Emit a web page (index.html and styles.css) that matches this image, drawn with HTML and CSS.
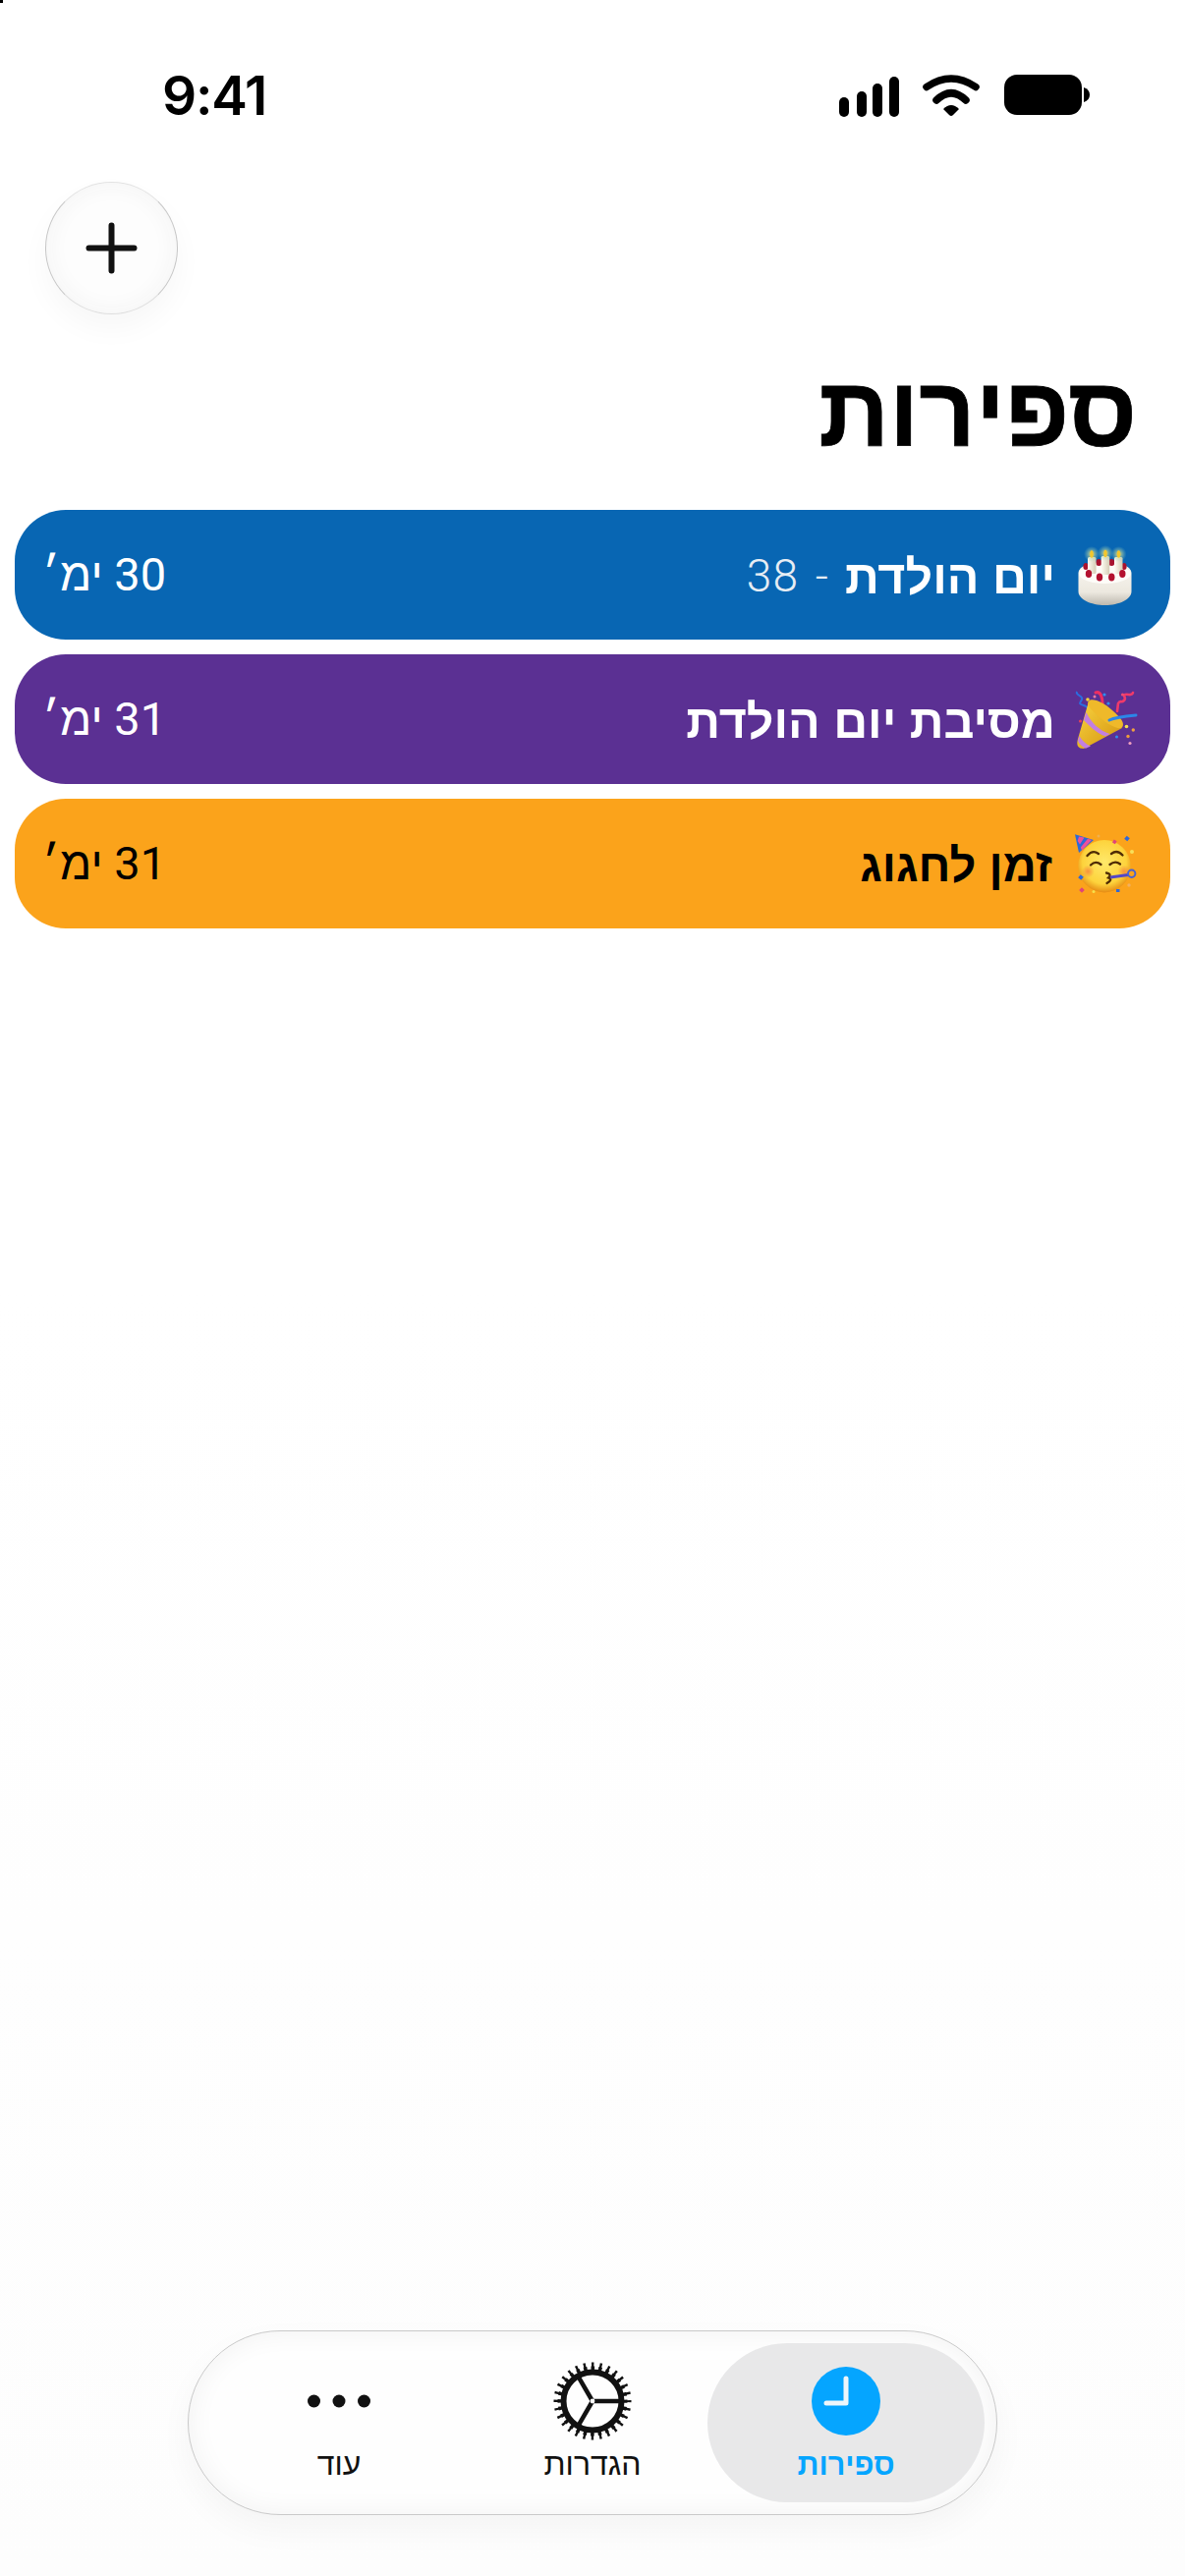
FILE: index.html
```html
<!DOCTYPE html>
<html lang="he" dir="rtl">
<head>
<meta charset="utf-8">
<title>ספירות</title>
<link rel="stylesheet" href="styles.css">
</head>
<body>
<div class="corner-mark"></div>
<div class="app">
  <header class="status" dir="ltr">
    <span class="time">9:41</span>
    <div class="status-icons">
      <svg class="signal" viewBox="0 0 61 41" width="61" height="41"><g fill="#000"><rect x="0" y="21" width="10" height="20" rx="5"/><rect x="18" y="15" width="10" height="26" rx="5"/><rect x="34" y="7" width="10" height="34" rx="5"/><rect x="51" y="0" width="10" height="41" rx="5"/></g></svg>
      <svg class="wifi" viewBox="0 0 58 42" width="58" height="42"><path d="M4 12.5Q29-4.5 54 12.5" fill="none" stroke="#000" stroke-width="7.5" stroke-linecap="round"/><path d="M14 26Q29 11.4 44 26" fill="none" stroke="#000" stroke-width="7.5" stroke-linecap="round"/><path d="M21 35Q29 27 37 35L31 41Q29 43 27 41Z" fill="#000"/></svg>
      <svg class="battery" viewBox="0 0 87 41" width="87" height="41"><rect x="0" y="0" width="79" height="41" rx="13" fill="#000"/><path d="M81 13Q87 15 87 20.5T81 28Z" fill="#000"/></svg>
    </div>
  </header>

  <div class="toolbar">
    <button class="add-btn" aria-label="הוספה">
      <svg viewBox="0 0 55 55" width="55" height="55"><path d="M27.5 4.500V50.500M4.500 27.500H50.500" stroke="#111" stroke-width="6" stroke-linecap="round" fill="none"/></svg>
    </button>
  </div>

  <h1 class="title">ספירות</h1>

  <ul class="counters">
    <li class="counter blue">
      <div class="counter-name">
        <svg class="emoji" viewBox="0 0 60 60">
          <defs>
            <linearGradient id="cakeBody" x1="0" x2="0" y1="0" y2="1"><stop offset="0" stop-color="#fbf9f3"/><stop offset=".7" stop-color="#ece8df"/><stop offset="1" stop-color="#bdb8ae"/></linearGradient>
            <linearGradient id="candle" x1="0" x2="1" y1="0" y2="0"><stop offset="0" stop-color="#fffdf4"/><stop offset="1" stop-color="#d5cdb6"/></linearGradient>
            <radialGradient id="glow"><stop offset="0" stop-color="#f5e57a" stop-opacity=".95"/><stop offset="1" stop-color="#8fd0c0" stop-opacity="0"/></radialGradient>
          </defs>
          <path d="M2.5 28.5C2.5 21 15 17 29.5 17S56.500 21 56.500 28.500V47C56.500 55 44 61 29.500 61S2.500 55 2.500 47Z" fill="url(#cakeBody)"/>
          <ellipse cx="29.500" cy="29" rx="26.500" ry="10" fill="#fdfcf8"/>
          <g fill="#a8132f"><ellipse cx="10" cy="21.500" rx="2.600" ry="3.500"/><ellipse cx="23.300" cy="17.500" rx="3" ry="3.600"/><ellipse cx="36.300" cy="17.500" rx="3" ry="3.600"/><ellipse cx="49" cy="21.500" rx="2.600" ry="3.500"/></g>
          <g fill="url(#candle)"><rect x="12" y="12" width="8.500" height="17" rx="1.500"/><rect x="25.700" y="11" width="8.500" height="19" rx="1.500"/><rect x="39" y="12" width="8.500" height="17" rx="1.500"/></g>
          <g fill="url(#glow)"><circle cx="16" cy="9" r="8"/><circle cx="30" cy="8" r="8"/><circle cx="43.500" cy="9" r="8"/></g>
          <g fill="#f2c62d"><ellipse cx="16" cy="9" rx="1.800" ry="3.800"/><ellipse cx="30" cy="8.500" rx="1.800" ry="3.800"/><ellipse cx="43.500" cy="9" rx="1.800" ry="3.800"/></g>
          <g fill="#b3112f"><ellipse cx="13" cy="29" rx="3.200" ry="4.100"/><ellipse cx="24" cy="32.500" rx="3.200" ry="4.100"/><ellipse cx="36.300" cy="32.500" rx="3.200" ry="4.100"/><ellipse cx="47.300" cy="29" rx="3.200" ry="4.100"/></g>
        </svg>
        <span class="name-main">יום הולדת</span>
        <span class="name-age">- 38</span>
      </div>
      <span class="counter-days">30 ימ׳</span>
    </li>
    <li class="counter purple">
      <div class="counter-name">
        <svg class="emoji" viewBox="0 0 60 60">
          <defs>
            <linearGradient id="coneFill" x1="0" x2="1" y1="0" y2="1"><stop offset="0" stop-color="#f9d440"/><stop offset="1" stop-color="#d3930f"/></linearGradient>
          </defs>
          <path d="M1 2C-1 6 8 6 6 10S2 14 8 16 12 21 11 24" fill="none" stroke="#2b6ee0" stroke-width="2"/>
          <path d="M20 3C25 1 27 8 27 14L28 24" fill="none" stroke="#ee2f62" stroke-width="3" stroke-linecap="round"/>
          <path d="M42 22L43 14C45 10 46 14 49 11S47 6 50 5 57 7 58 3" fill="none" stroke="#ef3a6a" stroke-width="2.600" stroke-linecap="round"/>
          <path d="M2 50L13 12 47 39 8 60Q-1 60 2 50Z" fill="url(#coneFill)"/>
          <path d="M10.500 23C15 33 24 42 34.500 45L30 47.500C20 44 12 35 8 31Z" fill="#c27fe0"/>
          <path d="M3.500 47C6 52 11 56 15 57.500L10 59.700C6 58 3 55 2 52Z" fill="#c27fe0"/>
          <path d="M13 11.500C17 8 28 13 37 21S50 34 47 38.500C43 41 33 36 24 28S10 15 13 11.500Z" fill="#efb92a"/>
          <path d="M34 31C40 28 50 27 61 26" fill="none" stroke="#2c86e8" stroke-width="3" stroke-linecap="round"/>
          <g><circle cx="12" cy="10" r="1.800" fill="#f3d33c"/><circle cx="19" cy="7" r="1.500" fill="#f07aa0"/><circle cx="29" cy="5" r="1.600" fill="#2f8cf0"/><circle cx="33" cy="14" r="1.600" fill="#2f8cf0"/><circle cx="47.500" cy="5" r="1.600" fill="#ee4c72"/><circle cx="4.500" cy="32" r="1.600" fill="#e0405c"/><circle cx="51.500" cy="37.500" r="1.800" fill="#f6de50"/><circle cx="58.300" cy="41" r="1.700" fill="#f0a040"/><circle cx="53" cy="47.500" r="1.700" fill="#ee9a3c"/><circle cx="41.500" cy="48" r="1.500" fill="#2f8cf0"/><circle cx="55" cy="54.500" r="1.600" fill="#f0a0c0"/></g>
        </svg>
        <span class="name-main">מסיבת יום הולדת</span>
      </div>
      <span class="counter-days">31 ימ׳</span>
    </li>
    <li class="counter orange">
      <div class="counter-name">
        <svg class="emoji" viewBox="0 0 60 60">
          <defs>
            <radialGradient id="faceFill" cx=".5" cy=".42" r=".58"><stop offset="0" stop-color="#ffe96a"/><stop offset=".72" stop-color="#fdd33c"/><stop offset="1" stop-color="#e68c14"/></radialGradient>
            <radialGradient id="blush"><stop offset="0" stop-color="#f4743c" stop-opacity=".7"/><stop offset="1" stop-color="#f4743c" stop-opacity="0"/></radialGradient>
          </defs>
          <circle cx="29" cy="32.700" r="26.700" fill="url(#faceFill)"/>
          <path d="M-1 .3L18 6 3 19Z" fill="#2c6ad6"/>
          <path d="M3 2.500L8.500 3.500 4 10.500 1.700 7ZM12 4.800L16 6 6 16.500 4.800 13.500Z" fill="#ee4f9c"/>
          <circle cx="12.300" cy="38" r="6.500" fill="url(#blush)"/><circle cx="49" cy="38" r="6.500" fill="url(#blush)"/>
          <g fill="none" stroke="#4f2c05" stroke-width="2.300" stroke-linecap="round"><path d="M11.500 22Q17 15.500 23 20"/><path d="M36 20Q42 15.500 47.500 21.500"/><path d="M15 31.500Q20 26.500 25.500 31"/><path d="M34.500 31Q40 26.500 45 30.500"/><path d="M31 39.500Q37 40.500 33 44.500 38 46 31.500 50"/></g>
          <path d="M35 44L53 41.500" fill="none" stroke="#5447c6" stroke-width="3"/>
          <circle cx="56.700" cy="40.300" r="3.700" fill="none" stroke="#4a63d0" stroke-width="2"/>
          <g><rect x="37.500" y="6" width="3.400" height="3.400" fill="#e0447a" transform="rotate(30 39 8)"/><rect x="50" y="2.500" width="4" height="4" fill="#2f68d8" transform="rotate(40 52 4.500)"/><circle cx="23" cy="2" r="1.500" fill="#f0b050"/><circle cx="57" cy="18" r="2" fill="#f7e05a"/><rect x="3" y="42" width="4" height="4" fill="#2f68d8" transform="rotate(40 5 44)"/><rect x="4" y="55" width="4" height="4" fill="#e0447a" transform="rotate(45 6 57)"/><circle cx="18" cy="58.500" r="1.500" fill="#f6e04a"/><rect x="41" y="56" width="3.500" height="3" fill="#2f68d8"/><circle cx="54" cy="52" r="1.700" fill="#f2b060"/></g>
        </svg>
        <span class="name-main">זמן לחגוג</span>
      </div>
      <span class="counter-days">31 ימ׳</span>
    </li>
  </ul>

  <nav class="tabbar">
    <a class="tab active">
      <svg class="tab-icon" viewBox="0 0 80 80" width="80" height="80"><circle cx="40" cy="40" r="35" fill="#05a5ff"/><path d="M40 17V42H20" fill="none" stroke="#eef6fb" stroke-width="5" stroke-linecap="round" stroke-linejoin="round"/></svg>
      <span>ספירות</span>
    </a>
    <a class="tab">
      <svg class="tab-icon" viewBox="0 0 80 80" width="80" height="80">
        <g fill="none" stroke="#111">
          <circle cx="40" cy="40" r="37" stroke-width="5" stroke-dasharray="2.400 5.900" stroke-dashoffset="1.200"/>
          <circle cx="40" cy="40" r="33.500" stroke-width="4" stroke-dasharray="3.600 3.920" stroke-dashoffset="1.800"/>
          <circle cx="40" cy="40" r="29.500" stroke-width="6"/>
          <path d="M40 40H68M40 40L26 15.800M40 40L26 64.200" stroke-width="4.500"/>
        </g>
        <circle cx="40" cy="40" r="2.400" fill="#fff"/>
      </svg>
      <span>הגדרות</span>
    </a>
    <a class="tab">
      <svg class="tab-icon" viewBox="0 0 80 80" width="80" height="80"><g fill="#111"><circle cx="14.500" cy="40" r="6.500"/><circle cx="40" cy="40" r="6.500"/><circle cx="65.500" cy="40" r="6.500"/></g></svg>
      <span>עוד</span>
    </a>
  </nav>
</div>
</body>
</html>
```

FILE: styles.css
```css
* { box-sizing: border-box; }

html, body {
  margin: 0;
  padding: 0;
  background: #fff;
}

body {
  font-family: "Liberation Sans", "DejaVu Sans", sans-serif;
  color: #000;
}

.corner-mark {
  position: absolute;
  left: 0;
  top: 0;
  width: 3px;
  height: 3px;
  background: #000;
}

.app {
  width: 1206px;
  height: 2622px;
  display: flex;
  flex-direction: column;
  overflow: hidden;
  background: linear-gradient(#fff 50%, #fdfdfd 100%);
}

.status {
  height: 184px;
  padding: 66px 97px 0 165px;
  display: flex;
  justify-content: space-between;
  align-items: flex-start;
}

.time {
  font-family: Inter, "Liberation Sans", sans-serif;
  font-weight: 600;
  font-size: 55px;
  line-height: 62px;
  letter-spacing: -1.2px;
}

.status-icons {
  display: flex;
  align-items: flex-start;
  gap: 24px;
  padding-top: 10px;
}

.signal { margin-top: 2px; }
.battery { margin-left: 1px; }

.toolbar {
  display: flex;
  justify-content: flex-end;
  padding: 1px 46px 0;
}

.add-btn {
  width: 135px;
  height: 135px;
  padding: 0;
  border-radius: 50%;
  border: 1.5px solid;
  border-color: #e2e2e2 #c6c6c6 #dedede;
  background: #fdfdfd;
  box-shadow: inset 0 0 24px #f3f3f3, 0 14px 30px rgba(0, 0, 0, .035);
  display: flex;
  align-items: center;
  justify-content: center;
}

.title {
  margin: 43px 49px 0 0;
  font-size: 100px;
  line-height: 112px;
  font-weight: 700;
  height: 156px;
  -webkit-text-stroke: .8px #000;
}

.counters {
  list-style: none;
  margin: 0;
  padding: 0 15px;
  display: flex;
  flex-direction: column;
  gap: 15px;
}

.counter {
  height: 132px;
  border-radius: 52px;
  padding: 0 36px 0 28px;
  display: flex;
  align-items: center;
  justify-content: space-between;
}

.blue { background: #0866b3; color: #fff; }
.purple { background: #5b3093; color: #fff; }
.orange { background: #fba31b; color: #000; }

.counter-name {
  display: flex;
  align-items: center;
}

.emoji {
  width: 60px;
  height: 60px;
  overflow: visible;
  margin-left: 21px;
  flex: none;
}

.orange .emoji { margin-left: 24px; }

.name-main {
  font-size: 48.4px;
  font-weight: 700;
  line-height: 56px;
  padding-top: 4px;
}

.orange .name-main { font-size: 47px; }

.name-age {
  font-family: Roboto, "Liberation Sans", sans-serif;
  font-weight: 300;
  font-size: 46px;
  line-height: 56px;
  margin-right: 16px;
  word-spacing: 4px;
  letter-spacing: 1.2px;
  color: #e6edf4;
  padding-top: 2px;
}

.counter-days {
  font-family: Roboto, "Liberation Sans", sans-serif;
  font-size: 47px;
  font-weight: 400;
  line-height: 56px;
}

.tabbar {
  margin: auto auto 62px;
  width: 824px;
  height: 188px;
  padding: 0 24px;
  border-radius: 94px;
  border: 1px solid #c9c9c9;
  background: #fefefe;
  box-shadow: inset 0 0 28px #f2f2f2, 0 14px 34px rgba(0, 0, 0, .04);
  display: grid;
  grid-template-columns: repeat(3, 258px);
  align-items: center;
}

.tab {
  height: 162px;
  border-radius: 81px;
  display: flex;
  flex-direction: column;
  align-items: center;
  font-size: 32px;
  line-height: 36px;
  font-weight: 400;
  color: #111;
  padding-top: 19px;
}

.tab.active {
  margin: 0 -12px 0 -12px;
  background: #e8e8e9;
  color: #05a5ff;
  font-weight: 700;
  font-size: 30.6px;
}

.tab-icon {
  flex: none;
  margin-bottom: 6px;
}
```
